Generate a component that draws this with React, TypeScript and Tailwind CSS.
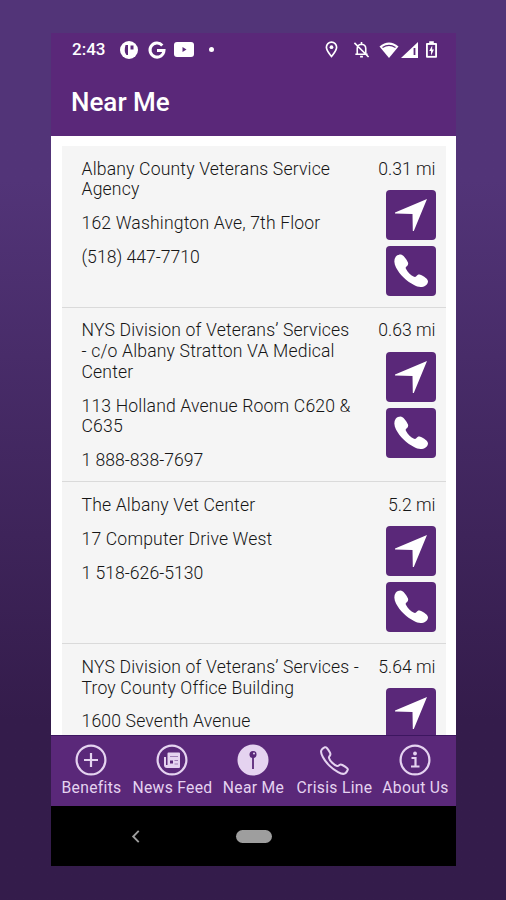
import type { ReactNode } from "react";
import { IoCallOutline } from "react-icons/io5";

type Place = {
  name: string[];
  address: string[];
  phone?: string;
  distance: string;
};

const places: Place[] = [
  {
    name: ["Albany County Veterans Service", "Agency"],
    address: ["162 Washington Ave, 7th Floor"],
    phone: "(518) 447-7710",
    distance: "0.31 mi",
  },
  {
    name: ["NYS Division of Veterans’ Services", "- c/o Albany Stratton VA Medical", "Center"],
    address: ["113 Holland Avenue Room C620 &", "C635"],
    phone: "1 888-838-7697",
    distance: "0.63 mi",
  },
  {
    name: ["The Albany Vet Center"],
    address: ["17 Computer Drive West"],
    phone: "1 518-626-5130",
    distance: "5.2 mi",
  },
  {
    name: ["NYS Division of Veterans’ Services -", "Troy County Office Building"],
    address: ["1600 Seventh Avenue"],
    distance: "5.64 mi",
  },
];

function Lines({ lines }: { lines: string[] }) {
  return (
    <p className="mb-[13px] whitespace-nowrap">
      {lines.map((line) => (
        <span key={line} className="block">
          {line}
        </span>
      ))}
    </p>
  );
}

function SquareButton({ label, children }: { label: string; children: ReactNode }) {
  return (
    <button aria-label={label} className="flex size-[50px] items-center justify-center rounded-[4px] bg-[#5a2879] text-white">
      {children}
    </button>
  );
}

function PlaceRow({ place }: { place: Place }) {
  return (
    <li className="flex justify-between border-b border-[#dadada] pt-[12.900px] pr-[10px] pb-[10.600px] pl-5">
      <div className="-mb-[13px] tracking-[0.160px]">
        <Lines lines={place.name} />
        <Lines lines={place.address} />
        {place.phone && (
          <div className="tracking-normal">
            <Lines lines={[place.phone]} />
          </div>
        )}
      </div>
      <div className="flex flex-col items-end gap-1.5">
        <span className="mb-[4.600px] whitespace-nowrap">{place.distance}</span>
        <SquareButton label="Directions">
          <svg viewBox="0 0 50 50" className="size-[50px]" fill="currentColor">
            <path d="M41 9 9 22.500v1l17.500.5L26.800 41h1z" />
          </svg>
        </SquareButton>
        <SquareButton label="Call">
          <svg viewBox="0 0 50 50" className="size-[50px]" fill="currentColor">
            <path d="M14.500 8.500c2.500 0 6 4.500 7.500 8 .6 2-.2 2.800-1.500 4-1 .8-1 1.500-.3 2.700 1.600 3 4.300 5.700 7.300 7.300 1.200.7 1.900.7 2.800-.3 1.200-1.300 2-2 4-1.500 3.500 1.500 7.700 4 7.700 6.700 0 1.500-1 3-2.400 4-3.300 2.300-7.600 1.900-12-.7C21 35.500 13.500 28.500 10 21.500c-2-4.300-2.300-8-.3-10.800 1-1.300 3.300-2.200 4.800-2.200z" />
          </svg>
        </SquareButton>
      </div>
    </li>
  );
}

function StatusBar() {
  return (
    <div className="flex h-[33px] items-center pr-[19.500px] pl-[21px] text-white">
      <span className="w-[47px] pt-px text-[17px] font-medium">2:43</span>
      <svg viewBox="0 0 20 20" className="size-5" fill="none">
        <circle cx="10" cy="10" r="9" fill="currentColor" />
        <path d="M6.500 5H9v10H7.500Q4.500 12 6.500 5M11.500 5.500h3v4h-3z" fill="#5a2879" />
      </svg>
      <svg viewBox="0 0 20 20" className="ml-[7.500px] size-5" fill="none" stroke="currentColor" strokeWidth="3">
        <path d="M15.300 5.500A7 7 0 1 0 17 10.500H10" />
      </svg>
      <svg viewBox="0 0 20 15" className="ml-[7.500px] h-[15px] w-5">
        <rect width="20" height="15" rx="3" fill="currentColor" />
        <path d="m8.500 5 4 2.500-4 2.500z" fill="#5a2879" />
      </svg>
      <span className="ml-[15px] size-[5px] rounded-full bg-white" />
      <svg viewBox="0 0 14 18" className="ml-auto h-[17px] w-[13px]" fill="none" stroke="currentColor" strokeWidth="1.800">
        <path d="M7 16.500C4 12.500 1.500 10 1.500 6.500a5.500 5.500 0 0 1 11 0c0 3.500-2.500 6-5.500 10z" />
        <circle cx="7" cy="6.500" r="2" fill="currentColor" stroke="none" />
      </svg>
      <svg viewBox="0 0 18 18" className="ml-[15px] size-[17px]" fill="none" stroke="currentColor" strokeWidth="1.700">
        <path d="M4.500 14V8Q4.500 4 9 3.500 13.500 4 13.500 8v6zM2.500 14h13M9 1v3M7.500 16.500h3M1.500 2l15 15" />
      </svg>
      <svg viewBox="0 0 20 16" className="ml-[9px] h-4 w-5">
        <path d="M.5 4.500Q10-3.500 19.500 4.500L10 16z" fill="currentColor" />
        <path d="M3.500 5.500Q10 1.300 16.500 5.500" fill="none" stroke="#5a2879" strokeWidth="1.300" />
      </svg>
      <svg viewBox="0 0 17 16" className="ml-0.5 h-4 w-[17px]">
        <path d="M17 0v16H0z" fill="currentColor" />
        <path d="M13.500 6v7" stroke="#5a2879" strokeWidth="1.800" />
      </svg>
      <svg viewBox="0 0 12 18" className="ml-[8px] h-[17px] w-[11px]">
        <path d="M3.500 0h5v2H11q1 0 1 1v14q0 1-1 1H1q-1 0-1-1V3q0-1 1-1h2.500z" fill="currentColor" />
        <path d="M2 4h8v12H2z" fill="#5a2879" />
        <path d="M6.800 4.500 3.500 10.500h2v5L8.700 9h-2z" fill="currentColor" />
      </svg>
    </div>
  );
}

const tabs: { label: string; icon: ReactNode }[] = [
  {
    label: "Benefits",
    icon: (
      <svg viewBox="0 0 32 32" className="size-8" fill="none" stroke="currentColor" strokeWidth="2.200">
        <circle cx="16" cy="16" r="14.400" />
        <path d="M16 9v14M9 16h14" />
      </svg>
    ),
  },
  {
    label: "News Feed",
    icon: (
      <svg viewBox="0 0 32 32" className="size-8" fill="none">
        <circle cx="16" cy="16" r="14.400" stroke="currentColor" strokeWidth="2.200" />
        <path d="M11.500 9.500q0-1 1-1h10.500q1 0 1 1v13.500q0 1-1 1H11q-3 0-3-3V13h2v8h1.500z" fill="currentColor" />
        <path d="M14 12.500h8M18.500 16.500H22M18.500 20H22" stroke="#5a2879" strokeOpacity=".5" strokeWidth="1" />
        <path d="M14 16.500h3v3h-3z" fill="#5a2879" />
      </svg>
    ),
  },
  {
    label: "Near Me",
    icon: (
      <svg viewBox="0 0 32 32" className="size-8" fill="none">
        <circle cx="16" cy="16" r="15.500" fill="currentColor" />
        <circle cx="16" cy="10.500" r="3.500" fill="#5a2879" />
        <path d="M16 12v13" stroke="#5a2879" strokeWidth="1.800" />
        <circle cx="17" cy="9.500" r="1" fill="currentColor" />
      </svg>
    ),
  },
  {
    label: "Crisis Line",
    icon: <IoCallOutline className="size-[33px] -mb-px stroke-[36]" />,
  },
  {
    label: "About Us",
    icon: (
      <svg viewBox="0 0 32 32" className="size-8" fill="none" stroke="currentColor" strokeWidth="2.200">
        <circle cx="16" cy="16" r="14.400" />
        <path d="M12.500 14h4v8M12 22.500h8.500" />
        <circle cx="16" cy="9.500" r="1.900" fill="currentColor" stroke="none" />
      </svg>
    ),
  },
];

export default function App() {
  return (
    <div className="flex h-[900px] w-[506px] flex-col overflow-hidden bg-linear-to-b from-[#523478] from-20% to-[#341c4b] to-80% pt-[33px] pl-[51px] font-['Roboto',sans-serif]">
      <div className="flex h-[833px] w-[405px] flex-col">
        <header className="h-[102.500px] shrink-0 bg-[#5a2879]">
          <StatusBar />
          <h1 className="pt-[18.500px] pl-5 text-[26px] leading-[34px] font-medium text-white">Near Me</h1>
        </header>
        <main className="h-[599.500px] shrink-0 overflow-hidden bg-white px-[10.500px] pt-[10.300px]">
          <ul className="bg-[#f5f5f5] text-[17.600px] leading-[20.700px] font-light text-[#161616]">
            {places.map((place) => (
              <PlaceRow key={place.distance} place={place} />
            ))}
          </ul>
        </main>
        <nav className="flex h-[71px] shrink-0 border-t border-[#3d1660] bg-[#5a2879] pt-2 text-[#e5d3f0]">
          {tabs.map((tab) => (
            <a key={tab.label} className="flex w-[81px] flex-col items-center">
              <span className="mr-px">{tab.icon}</span>
              <span className="mt-0.5 text-[15.700px] leading-5 tracking-[0.300px] whitespace-nowrap">{tab.label}</span>
            </a>
          ))}
        </nav>
        <div className="flex h-[60px] shrink-0 items-center bg-black text-[#9e9e9e]">
          <svg viewBox="0 0 9 14" className="ml-20 h-[13px] w-[9px]" fill="none" stroke="currentColor" strokeWidth="2">
            <path d="M8 1 2 7l6 6" />
          </svg>
          <span className="ml-24 h-[13px] w-9 rounded-full bg-[#9e9e9e]" />
        </div>
      </div>
    </div>
  );
}
